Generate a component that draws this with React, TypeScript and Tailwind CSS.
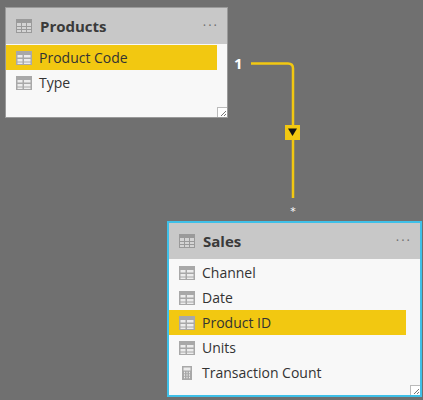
import React from 'react';

const font = { fontFamily: '"Segoe UI", "Open Sans", "Noto Sans", sans-serif' };

function TableIcon({ className = '' }: { className?: string }) {
    return (
        <svg width="16" height="14" viewBox="0 0 16 14" className={className}>
            <rect x="0.5" y="0.5" width="15" height="13" fill="#d4d4d4" stroke="#9a9a9a" />
            <rect x="1" y="1" width="14" height="3" fill="#9a9a9a" />
            <path d="M1 7.5H15M1 10.5H15M5.5 4V13M10.5 4V13" stroke="#9a9a9a" strokeWidth="1" />
        </svg>
    );
}

function FieldIcon() {
    return (
        <svg width="16" height="14" viewBox="0 0 16 14">
            <rect x="0" y="0" width="16" height="14" fill="#a8a8a8" />
            <rect x="1.5" y="4" width="5" height="2.5" fill="#ececec" />
            <rect x="8" y="4" width="6.5" height="2.5" fill="#ececec" />
            <rect x="1.5" y="8" width="5" height="2.5" fill="#ececec" />
            <rect x="8" y="8" width="6.5" height="2.5" fill="#ececec" />
            <rect x="1.5" y="11.5" width="5" height="1.5" fill="#ececec" />
            <rect x="8" y="11.5" width="6.5" height="1.5" fill="#ececec" />
        </svg>
    );
}

function CalcIcon() {
    return (
        <svg width="16" height="14" viewBox="0 0 16 14">
            <rect x="3" y="0" width="10" height="14" fill="#a8a8a8" />
            <rect x="4.5" y="1.5" width="7" height="3" fill="#ececec" />
            <path d="M5 6.5h1M7.5 6.5h1M10 6.5h1M5 9h1M7.5 9h1M10 9h1M5 11.5h1M7.5 11.5h1M10 11.5h1" stroke="#ececec" strokeWidth="1.5" />
        </svg>
    );
}

type Field = { name: string; hl?: boolean; calc?: boolean };

function Card({ title, fields, className, selected, rowRight }: { title: string; fields: Field[]; className: string; selected?: boolean; rowRight: string }) {
    return (
        <div className={`absolute flex flex-col bg-[#f8f8f8] ${selected ? 'border-2 border-[#3fc0e8]' : 'border border-[#9a9a9a]'} ${className}`} style={font}>
            <div className="flex items-center h-[36px] bg-[#c8c8c8] pl-[10px] pr-[8px] shrink-0">
                <TableIcon />
                <span className="ml-[8px] text-[15px] font-bold text-[#3a3a3a]">{title}</span>
                <span className="ml-auto text-[#707070] text-[13px] tracking-[2px]">···</span>
            </div>
            <div className={`flex flex-col pt-[1px] ${rowRight}`}>
                {fields.map((f) => (
                    <div key={f.name} className={`flex items-center h-[25px] pl-[10px] ${f.hl ? 'bg-[#f2c811]' : ''}`}>
                        {f.calc ? <CalcIcon /> : <FieldIcon />}
                        <span className="ml-[7px] text-[14px] text-[#333]">{f.name}</span>
                    </div>
                ))}
            </div>
            <div className="absolute right-0 bottom-0 w-[10px] h-[10px] border-l border-t border-[#bbb] bg-white">
                <svg width="9" height="9" viewBox="0 0 9 9"><path d="M3 8L8 3M6 8L8 6" stroke="#777" strokeWidth="1" /></svg>
            </div>
        </div>
    );
}

export default function App() {
    return (
        <div className="relative w-[423px] h-[400px] bg-[#707070] overflow-hidden">
            <svg className="absolute left-0 top-0" width="423" height="400">
                <path d="M251 63.5H288Q293 63.5 293 68.5V198" stroke="#f2c811" strokeWidth="2.5" fill="none" />
                <rect x="285" y="125" width="15" height="15" fill="#f2c811" />
                <path d="M288 128.5H297L292.5 136Z" fill="#111" />
                <text x="293" y="215" fill="#fff" fontSize="11" textAnchor="middle" fontFamily="DejaVu Sans">*</text>
            </svg>
            <span className="absolute left-[234px] top-[52px] text-white text-[15px] font-bold" style={font}>1</span>
            <Card
                title="Products"
                className="left-[5px] top-[7px] w-[223px] h-[111px]"
                rowRight="pr-[10px]"
                fields={[{ name: 'Product Code', hl: true }, { name: 'Type' }]}
            />
            <Card
                title="Sales"
                selected
                className="left-[167px] top-[221px] w-[255px] h-[176px]"
                rowRight="pr-[14px] pt-[0px]"
                fields={[
                    { name: 'Channel' },
                    { name: 'Date' },
                    { name: 'Product ID', hl: true },
                    { name: 'Units' },
                    { name: 'Transaction Count', calc: true },
                ]}
            />
        </div>
    );
}
